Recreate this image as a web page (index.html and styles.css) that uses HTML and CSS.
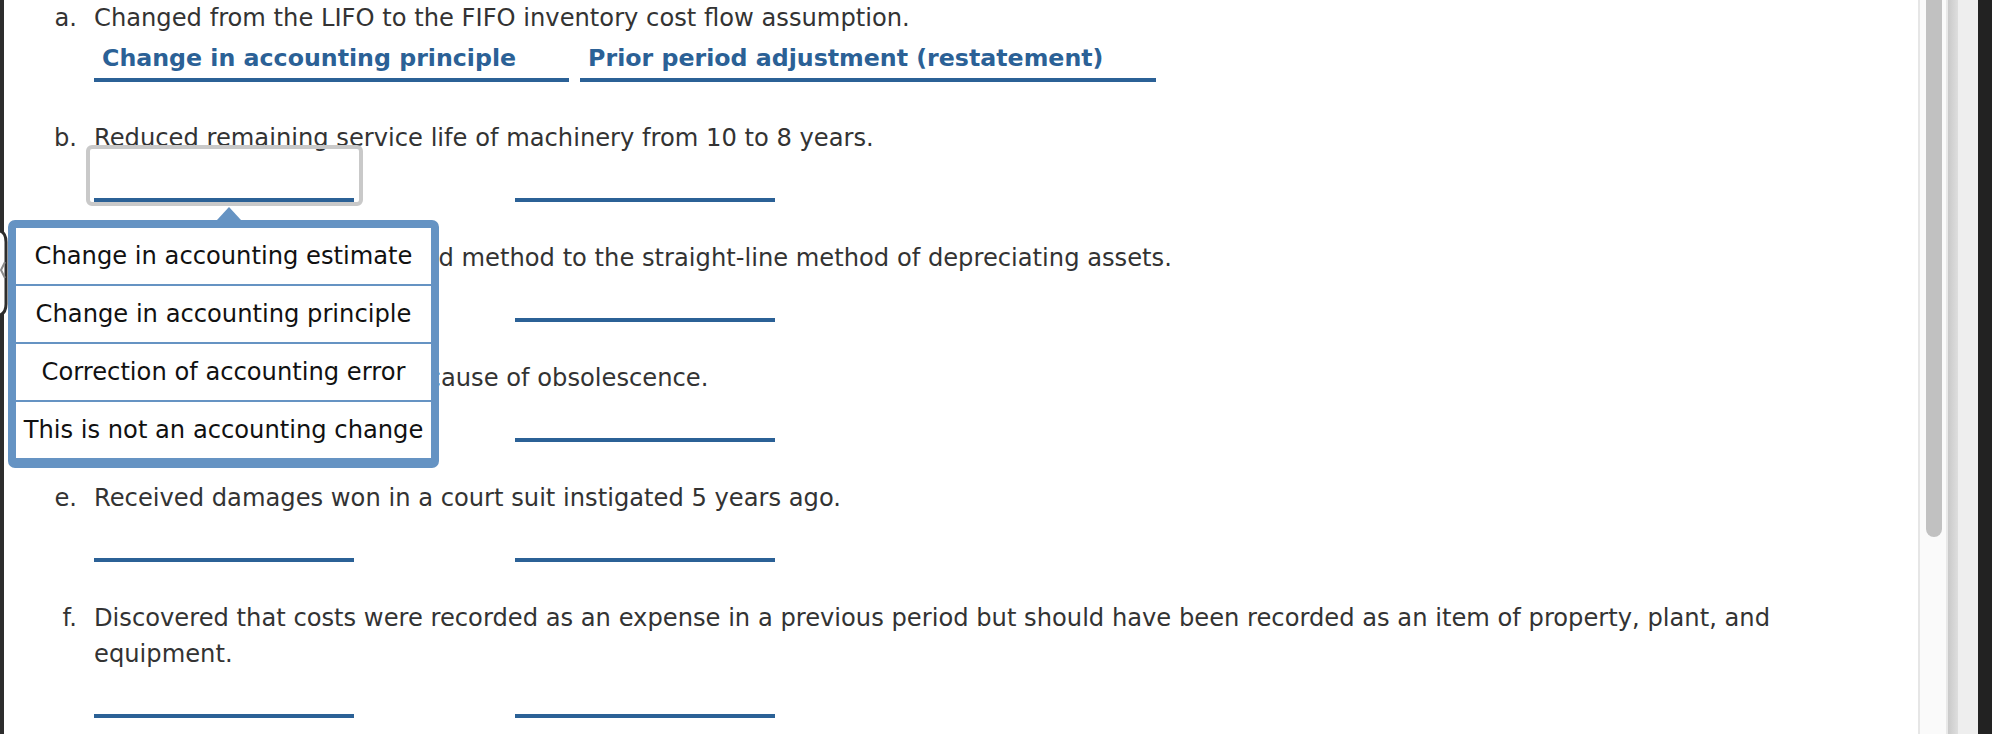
FILE: index.html
```html
<!DOCTYPE html>
<html lang="en">

<head>
    <meta charset="UTF-8">
    <title>Accounting changes</title>
    <link rel="stylesheet" href="styles.css">
</head>

<body>
    <div class="edge">
        <svg class="handle" width="8" height="86" viewBox="0 0 8 86">
            <path d="M0 1 Q6 3 6 12 V74 Q6 83 0 85" fill="#fff" stroke="#2d2d2d" stroke-width="3" />
            <path d="M5 32 L1 40 L5 48" fill="none" stroke="#8a8a8a" stroke-width="2" />
        </svg>
    </div>

    <main class="sheet">
        <ol class="items">
            <li class="item">
                <span class="tag">a.</span>
                <div class="body">
                    <p class="q">Changed from the LIFO to the FIFO inventory cost flow assumption.</p>
                    <div class="answers">
                        <div class="slot"><span class="field">Change in accounting principle</span></div>
                        <div class="slot"><span class="field">Prior period adjustment (restatement)</span></div>
                    </div>
                </div>
            </li>
            <li class="item">
                <span class="tag">b.</span>
                <div class="body">
                    <p class="q">Reduced remaining service life of machinery from 10 to 8 years.</p>
                    <div class="answers">
                        <div class="slot">
                            <span class="field empty focus"></span>
                            <ul class="menu">
                                <li>Change in accounting estimate</li>
                                <li>Change in accounting principle</li>
                                <li>Correction of accounting error</li>
                                <li>This is not an accounting change</li>
                            </ul>
                        </div>
                        <div class="slot"><span class="field empty"></span></div>
                    </div>
                </div>
            </li>
            <li class="item">
                <span class="tag">c.</span>
                <div class="body">
                    <p class="q">Changed from an accelerated method to the straight-line method of depreciating assets.</p>
                    <div class="answers">
                        <div class="slot"><span class="field empty"></span></div>
                        <div class="slot"><span class="field empty"></span></div>
                    </div>
                </div>
            </li>
            <li class="item">
                <span class="tag">d.</span>
                <div class="body">
                    <p class="q">Wrote off inventory item because of obsolescence.</p>
                    <div class="answers">
                        <div class="slot"><span class="field empty"></span></div>
                        <div class="slot"><span class="field empty"></span></div>
                    </div>
                </div>
            </li>
            <li class="item">
                <span class="tag">e.</span>
                <div class="body">
                    <p class="q">Received damages won in a court suit instigated 5 years ago.</p>
                    <div class="answers">
                        <div class="slot"><span class="field empty"></span></div>
                        <div class="slot"><span class="field empty"></span></div>
                    </div>
                </div>
            </li>
            <li class="item">
                <span class="tag">f.</span>
                <div class="body">
                    <p class="q">Discovered that costs were recorded as an expense in a previous period but should have been recorded as an item of property, plant, and equipment.</p>
                    <div class="answers">
                        <div class="slot"><span class="field empty"></span></div>
                        <div class="slot"><span class="field empty"></span></div>
                    </div>
                </div>
            </li>
        </ol>
    </main>

    <div class="scroll">
        <div class="track">
            <div class="thumb"></div>
        </div>
        <div class="shade"></div>
        <div class="gutter"></div>
        <div class="dark"></div>
    </div>
</body>

</html>
```

FILE: styles.css
```css
body {
    margin: 0;
    padding: 0;
    height: 734px;
    overflow: hidden;
    display: flex;
    font-family: "DejaVu Sans", Verdana, sans-serif;
    font-size: 24.2px;
    color: #333;
    background-color: #fff;
}

.edge {
    width: 4px;
    background-color: #2d2d2d;
    position: relative;
}

.handle {
    position: absolute;
    top: 230px;
    left: 0;
}

.sheet {
    flex: 1;
    padding-left: 37px;
    overflow: hidden;
}

.items {
    list-style: none;
    margin: 0;
    padding: 0;
}

.item {
    display: flex;
    padding-bottom: 38px;
}

.tag {
    width: 36px;
    margin-right: 17px;
    text-align: right;
    line-height: 36px;
    flex-shrink: 0;
}

.body {
    max-width: 1712px;
}

.q {
    margin: 0;
    line-height: 36px;
}

.answers {
    display: flex;
    margin-top: 4px;
}

.slot {
    min-width: 410px;
    margin-right: 11px;
    position: relative;
}

.field {
    display: block;
    height: 36px;
    line-height: 36px;
    padding: 0 53px 2px 8px;
    border-bottom: 4px solid #2b6196;
    color: #2b6196;
    font-size: 23.7px;
    font-weight: bold;
    white-space: nowrap;
}

.field.empty {
    width: 260px;
    padding: 0 0 2px 0;
}

.field.focus {
    position: relative;
}

.field.focus::after {
    content: "";
    position: absolute;
    top: -15px;
    left: -8px;
    right: -9px;
    bottom: -8px;
    border: 4px solid #c9c9c9;
    border-radius: 6px;
}

/* dropdown opened from the focused blank */
.menu {
    position: absolute;
    top: 60px;
    left: -86px;
    z-index: 10;
    width: 415px;
    margin: 0;
    padding: 0;
    list-style: none;
    border: 8px solid #6593c3;
    border-bottom-width: 10px;
    border-radius: 7px;
    background-color: #6593c3;
}

.menu::before {
    content: "";
    position: absolute;
    top: -21px;
    left: 201px;
    border-left: 12px solid transparent;
    border-right: 12px solid transparent;
    border-bottom: 13px solid #6593c3;
}

.menu li {
    height: 56px;
    line-height: 56px;
    text-align: center;
    background-color: #fff;
    color: #111;
}

.menu li + li {
    margin-top: 2px;
}

.scroll {
    display: flex;
    width: 74px;
    flex-shrink: 0;
}

.track {
    width: 26px;
    background-color: #fafafa;
    border-left: 2px solid #e6e6e6;
    border-right: 2px solid #e8e8e8;
}

.thumb {
    width: 16px;
    height: 537px;
    margin-left: 6px;
    background-color: #c1c1c1;
    border-radius: 0 0 8px 8px;
}

.shade {
    width: 10px;
    background: linear-gradient(to right, #c9c9c9, #dedede);
}

.gutter {
    width: 20px;
    background-color: #eee;
}

.dark {
    flex: 1;
    background-color: #222;
}
```
